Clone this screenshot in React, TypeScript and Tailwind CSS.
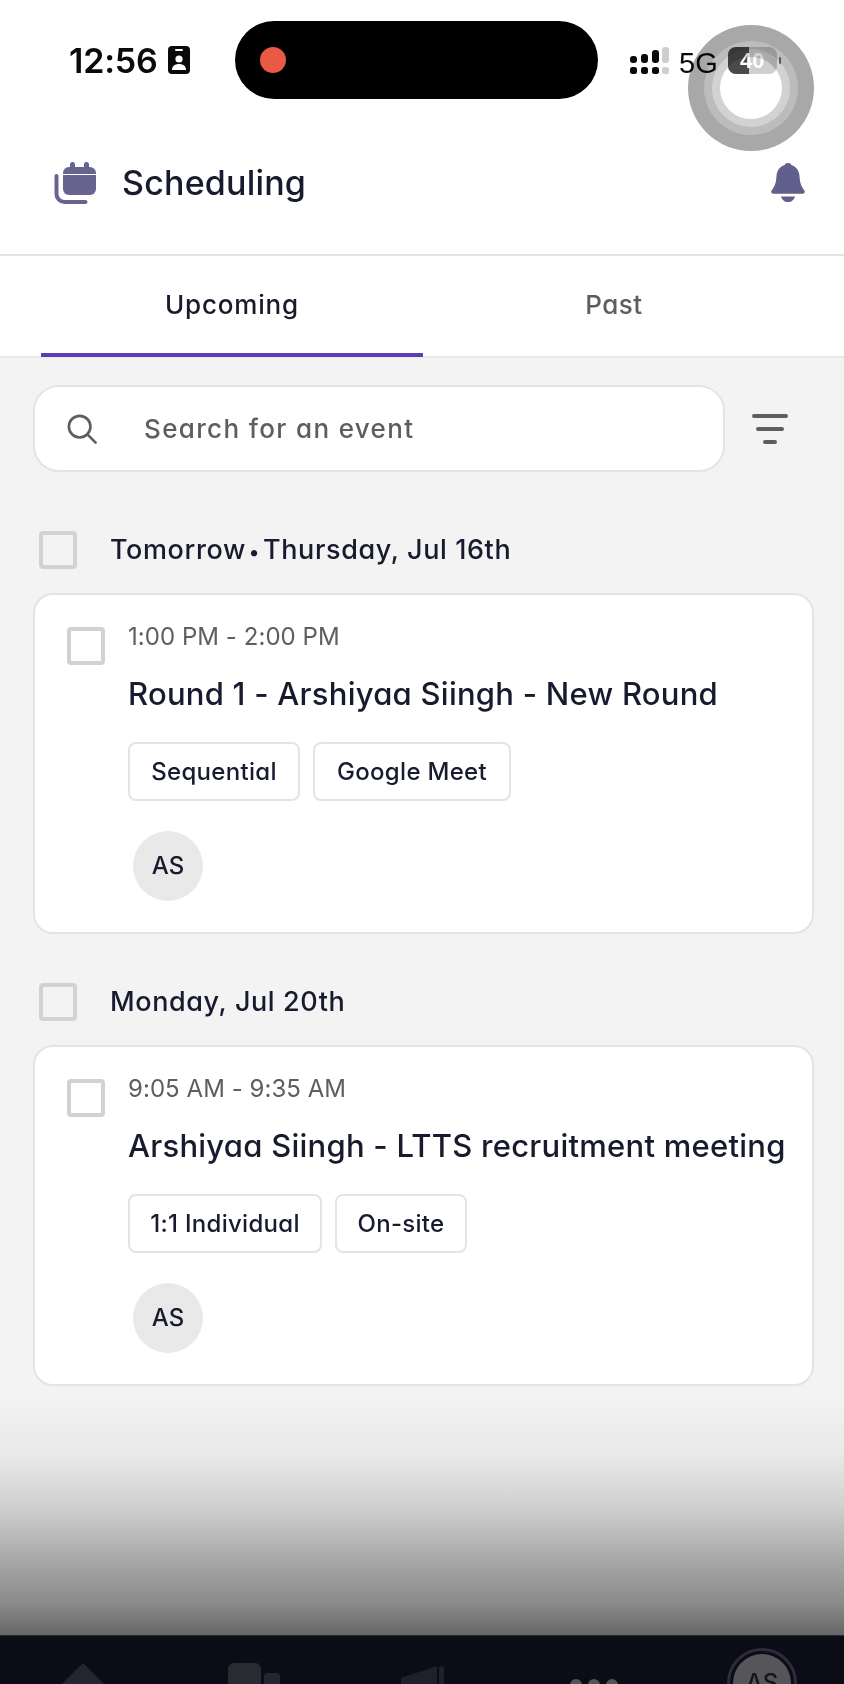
const font = "font-['Inter','Noto_Sans',sans-serif] [font-feature-settings:'cv11']";

function Checkbox({ className }: { className: string }) {
  return <div className={`w-[38px] h-[38px] shrink-0 rounded-[4px] border-[4px] border-[#d2d2d2] ${className}`} />;
}

function Tag({ label, width }: { label: string; width: string }) {
  return (
    <div className={`h-[59px] ${width} flex items-center justify-center bg-white rounded-[8px] border-2 border-[#e4e4e4] text-[24px] font-medium tracking-[0.3px] text-[#181a2e]`}>
      {label}
    </div>
  );
}

function EventGroup({ date, time, title, tags }: { date: React.ReactNode; time: string; title: string; tags: { label: string; width: string }[] }) {
  return (
    <section>
      <div className="flex items-center gap-[33px] pl-[6px] h-[38px]">
        <Checkbox className="bg-[#f3f3f3]" />
        <h2 className="text-[27px] font-medium tracking-[0.6px] text-[#181a2e]">{date}</h2>
      </div>
      <div className="mt-[24px] h-[341px] bg-white rounded-[20px] border-2 border-[#e4e4e4] pl-[32px] pt-[32px] flex gap-[23px]">
        <Checkbox className="bg-white" />
        <div className="flex flex-col">
          <p className="text-[24px] leading-[32px] -mt-[6px] tracking-[0.05px] text-[#5e5e5e]">{time}</p>
          <h3 className="text-[31px] leading-[40px] mt-[21px] font-medium whitespace-nowrap tracking-[0.25px] text-[#181a2e]">{title}</h3>
          <div className="flex gap-[13px] mt-[28px]">
            {tags.map(tag => (
              <Tag key={tag.label} label={tag.label} width={tag.width} />
            ))}
          </div>
          <div className="ml-[5px] mt-[30px] w-[70px] h-[70px] rounded-full bg-[#e9e9e9] flex items-center justify-center text-[24px] font-medium text-[#181a2e]">
            AS
          </div>
        </div>
      </div>
    </section>
  );
}

export default function App() {
  return (
    <div className={`relative w-[844px] h-[1684px] overflow-hidden bg-[#f3f3f3] flex flex-col ${font}`}>
      {/* Status bar */}
      <div className="h-[124px] bg-white flex items-start pt-[21px] pl-[69px] shrink-0">
        <span className="w-[88px] text-[34px] leading-[40px] mt-[20px] font-semibold tracking-[-0.2px] text-[#0a0a0a] whitespace-nowrap">12:56</span>
        <svg className="ml-[11px] mt-[25px]" width="22" height="28" viewBox="0 0 22 28">
          <rect width="22" height="28" rx="4" fill="#0a0a0a" />
          <rect x="7" y="3" width="8" height="2" rx="1" fill="#fff" />
          <circle cx="11" cy="13" r="3.6" fill="#fff" />
          <path d="M4 24c0-4 3-6 7-6s7 2 7 6z" fill="#fff" />
        </svg>
        <div className="ml-[45px] w-[363px] h-[78px] rounded-[39px] bg-black flex items-center pl-[25px]">
          <div className="w-[26px] h-[26px] rounded-full bg-[#e85a45]" />
        </div>
        <svg className="ml-[32px] mt-[26px]" width="40" height="28" viewBox="0 0 40 28">
          <rect y="9" width="7" height="7" rx="3" fill="#0a0a0a" />
          <rect x="11" y="7" width="7" height="9" rx="3" fill="#0a0a0a" />
          <rect x="22" y="3" width="7" height="13" rx="3" fill="#0a0a0a" />
          <rect x="32" y="0" width="7" height="16" rx="3" fill="#cfcfcf" />
          <rect y="20" width="7" height="7" rx="2.5" fill="#0a0a0a" />
          <rect x="11" y="20" width="7" height="7" rx="2.5" fill="#0a0a0a" />
          <rect x="22" y="20" width="7" height="7" rx="2.5" fill="#0a0a0a" />
          <rect x="32" y="20" width="7" height="7" rx="2.5" fill="#cfcfcf" />
        </svg>
        <span className="ml-[9px] mt-[25px] text-[29px] leading-[34px] text-[#0a0a0a] font-['Liberation_Sans',sans-serif]">5G</span>
        <div className="ml-[10px] mt-[26px] relative w-[49px] h-[27px] rounded-[8px] overflow-hidden bg-[#cfcfcf] flex items-center justify-center">
          <div className="absolute left-0 top-0 bottom-0 w-[21px] bg-[#4a4a4a]" />
          <span className="relative text-[22px] font-bold text-white font-['Liberation_Sans',sans-serif]">40</span>
        </div>
        <div className="ml-[2px] mt-[36px] w-[2px] h-[7px] rounded-full bg-[#777777]" />
      </div>

      {/* Assistive touch ring */}
      <div className="absolute left-[656px] top-[-7px] w-[190px] h-[190px] rounded-full bg-[#fefefe] mix-blend-multiply flex items-center justify-center">
        <div className="w-[126px] h-[126px] rounded-full bg-[#a8a8a8] flex items-center justify-center">
          <div className="w-[94px] h-[94px] rounded-full bg-[#bcbcbc] flex items-center justify-center">
            <div className="w-[78px] h-[78px] rounded-full bg-[#d2d2d2] flex items-center justify-center">
              <div className="w-[62px] h-[62px] rounded-full bg-white" />
            </div>
          </div>
        </div>
      </div>

      {/* Header */}
      <header className="h-[134px] -mt-[2px] pb-[11px] bg-white border-b-2 border-[#e2e2e2] flex items-center pl-[54px] pr-[38px] shrink-0">
        <svg width="44" height="42" viewBox="0 0 44 42">
          <path d="M2.500 14v18a8 8 0 0 0 8 8h21" fill="none" stroke="#67658f" strokeWidth="4" strokeLinecap="round" />
          <rect x="16" y="0" width="5" height="9" rx="2.5" fill="#67658f" />
          <rect x="30" y="0" width="5" height="9" rx="2.5" fill="#67658f" />
          <path d="M9 11a6 6 0 0 1 6-6h21a6 6 0 0 1 6 6v1H9z" fill="#67658f" />
          <path d="M9 13h33v14a6 6 0 0 1-6 6H15a6 6 0 0 1-6-6z" fill="#67658f" />
        </svg>
        <h1 className="ml-[24px] text-[34px] font-medium tracking-[0.2px] text-[#181a2e]">Scheduling</h1>
        <svg className="ml-auto" width="36" height="39" viewBox="0 0 36 42" preserveAspectRatio="none">
          <circle cx="18" cy="3.500" r="3.500" fill="#615f8c" />
          <path d="M18 2c-7 0-11 5-11.500 12-.4 6-1 10-4.500 15-1.500 2-.8 4 2 4h28c2.800 0 3.500-2 2-4-3.500-5-4.100-9-4.500-15C29 7 25 2 18 2z" fill="#615f8c" />
          <path d="M11 36h14c-1 3.500-3.500 6-7 6s-6-2.500-7-6z" fill="#615f8c" />
        </svg>
      </header>

      {/* Tabs */}
      <div className="h-[102px] bg-white border-b-2 border-[#e9e9e9] pl-[41px] flex shrink-0">
        <div className="w-[382px] h-[101px] border-b-[4px] border-[#5b3db5] flex items-center justify-center text-[26px] font-medium tracking-[0.8px] text-[#181a2e]">
          Upcoming
        </div>
        <div className="w-[382px] h-[101px] pb-[4px] flex items-center justify-center text-[26px] font-medium tracking-[0.5px] text-[#5e5e5e]">
          Past
        </div>
      </div>

      {/* Search */}
      <div className="mt-[27px] pl-[33px] flex items-center shrink-0">
        <div className="w-[692px] h-[87px] rounded-[26px] bg-white border-2 border-[#e4e4e4] flex items-center pl-[32px]">
          <svg width="30" height="30" viewBox="0 0 32 32" fill="none" stroke="#5e5e5e" strokeWidth="2.800" strokeLinecap="round">
            <circle cx="13.500" cy="13.500" r="11.500" />
            <path d="M22 22l8.500 8.500" />
          </svg>
          <span className="ml-[47px] text-[26px] font-medium tracking-[1.35px] text-[#5e5e5e]">Search for an event</span>
        </div>
        <svg className="ml-[27px]" width="36" height="30" viewBox="0 0 36 30" stroke="#5e5e5e" strokeWidth="4" strokeLinecap="round">
          <path d="M2 2h32M6 15h24M13 28h10" />
        </svg>
      </div>

      {/* Events */}
      <div className="mt-[59px] pl-[33px] pr-[30px] flex flex-col gap-[49px] shrink-0">
        <EventGroup
          date={<>Tomorrow{'\u200A'}<span className="text-[20px]">•</span>{'\u200A'}Thursday, Jul 16th</>}
          time="1:00 PM - 2:00 PM"
          title="Round 1 - Arshiyaa Siingh - New Round"
          tags={[
            { label: 'Sequential', width: 'w-[172px]' },
            { label: 'Google Meet', width: 'w-[198px]' },
          ]}
        />
        <EventGroup
          date="Monday, Jul 20th"
          time="9:05 AM - 9:35 AM"
          title="Arshiyaa Siingh - LTTS recruitment meeting"
          tags={[
            { label: '1:1 Individual', width: 'w-[194px]' },
            { label: 'On-site', width: 'w-[132px]' },
          ]}
        />
      </div>

      {/* Bottom fade */}
      <div className="mt-[8px] flex-1 bg-[linear-gradient(to_bottom,#f3f3f3_0%,#e9e9e9_25%,#d1d1d1_46%,#a9a9a9_68%,#8a8a8a_87%,#666666_100%)]" />

      {/* Bottom nav, cropped by the screen edge */}
      <nav className="h-[49px] shrink-0 bg-[#0b0c15] border-t border-[#2a2b38] overflow-hidden flex items-start">
        <svg className="ml-[59px] mt-[27px] shrink-0" width="48" height="22" viewBox="0 0 48 22">
          <path d="M24 0L48 24H0z" fill="#25252f" />
        </svg>
        <svg className="ml-[121px] mt-[27px] shrink-0" width="52" height="22" viewBox="0 0 52 22">
          <rect width="33" height="40" rx="6" fill="#2a2a33" />
          <rect x="36" y="10" width="16" height="30" rx="4" fill="#25252f" />
        </svg>
        <svg className="ml-[118px] mt-[30px] shrink-0" width="46" height="19" viewBox="0 0 46 19">
          <path d="M3 12l36-12v30L3 30z" fill="#20202a" />
          <rect x="41" y="0" width="5" height="30" rx="2.500" fill="#20202a" />
        </svg>
        <svg className="ml-[126px] mt-[42px] shrink-0" width="48" height="7" viewBox="0 0 48 7" fill="#555559">
          <circle cx="6" cy="7" r="6" />
          <circle cx="24" cy="7" r="6" />
          <circle cx="42" cy="7" r="6" />
        </svg>
        <div className="ml-[109px] mt-[12px] w-[70px] h-[70px] shrink-0 rounded-full border-[3px] border-[#2d2c3d] p-[3px]">
          <div className="w-full h-full rounded-full bg-[#55555a] flex items-center justify-center text-[24px] font-medium text-[#14141c]">
            AS
          </div>
        </div>
      </nav>
    </div>
  );
}
